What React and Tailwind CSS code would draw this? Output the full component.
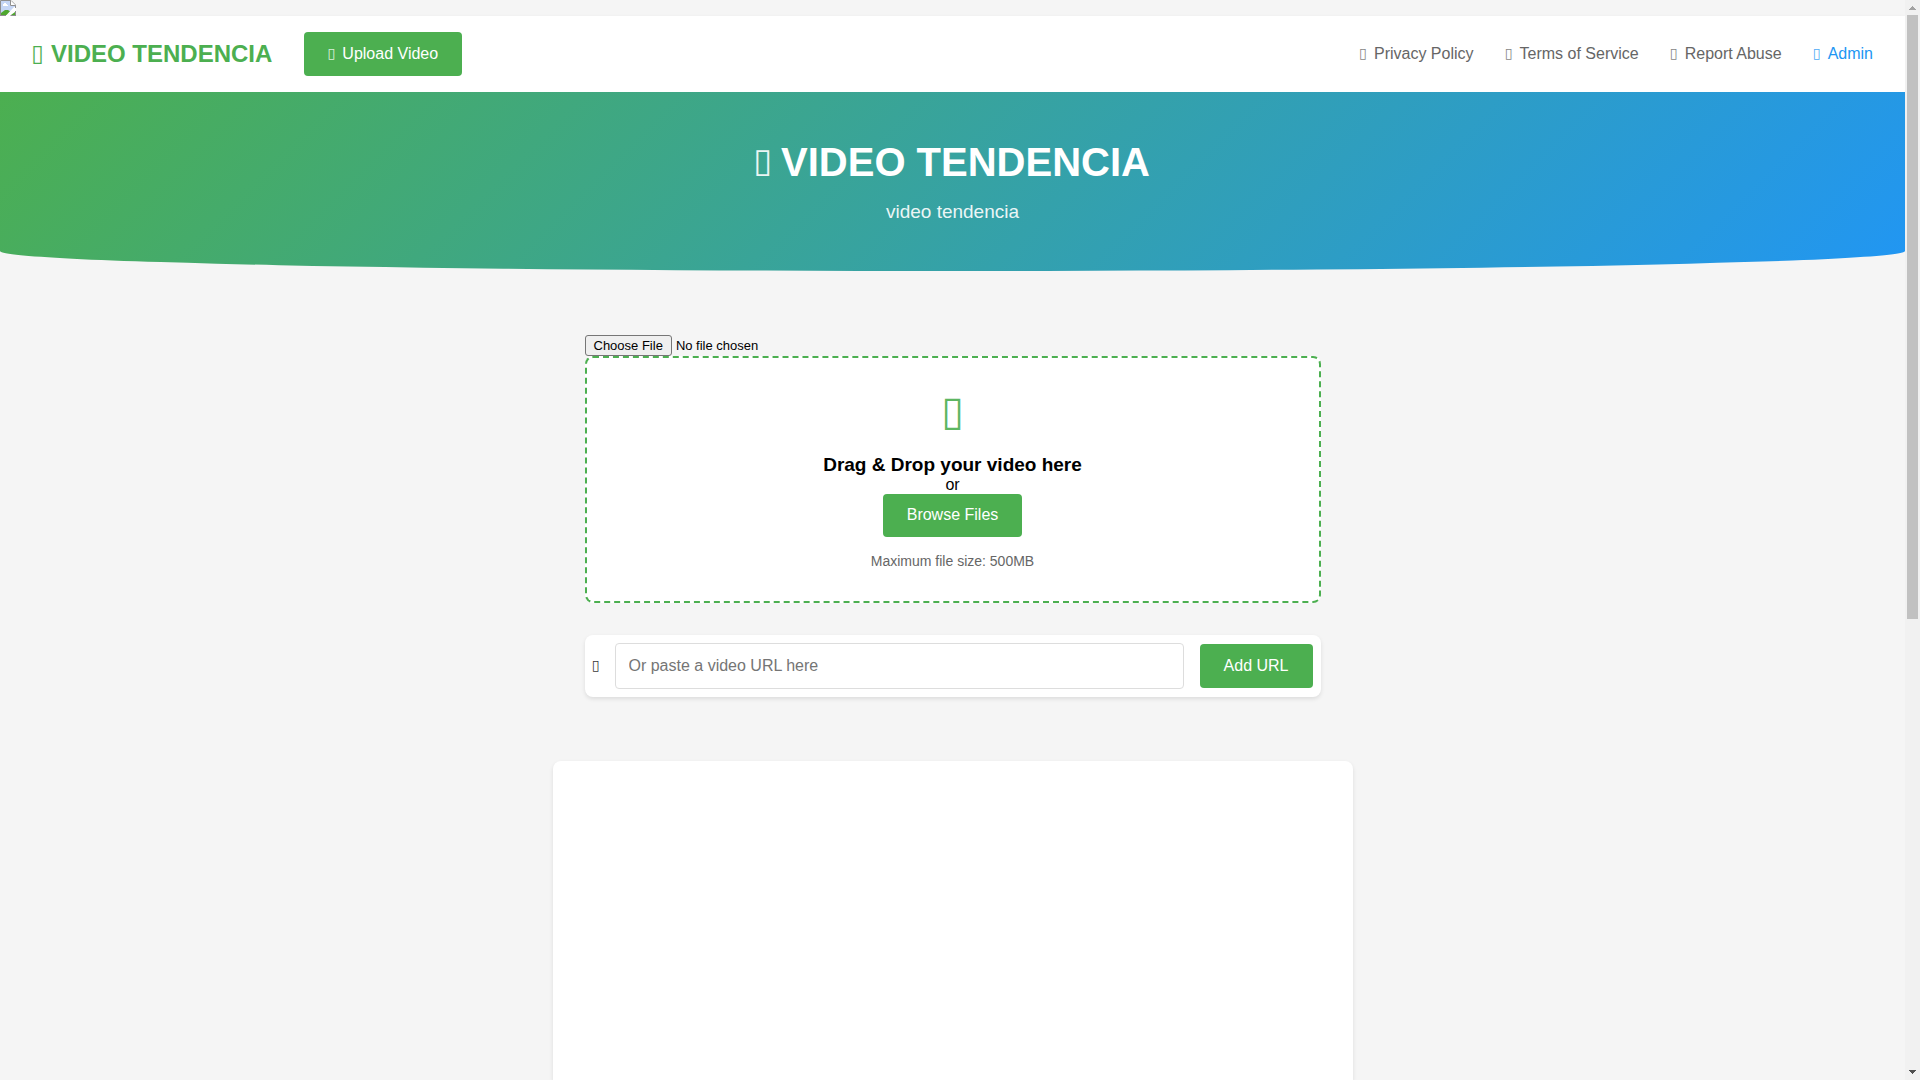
const glyphSizes = {
  sm: "h-[18px] w-1.5 pb-0.5 text-sm opacity-80",
  md: "h-6 w-[11px] pb-0.5 text-[23px]",
  lg: "h-[35px] w-[15px] pb-1.5 text-[34px] opacity-90",
  xl: "h-12 w-4 pb-1.5 text-[41px] opacity-90",
};

function Glyph({ size = "sm" }) {
  return (
    <i
      aria-hidden="true"
      className={`inline-flex shrink-0 items-center justify-center font-['DejaVu_Sans',sans-serif] font-normal not-italic leading-none ${glyphSizes[size]}`}
    >
      ▯
    </i>
  );
}

const links = [
  { label: "Privacy Policy", color: "text-[#666666]" },
  { label: "Terms of Service", color: "text-[#666666]" },
  { label: "Report Abuse", color: "text-[#666666]" },
  { label: "Admin", color: "text-[#2196f3]" },
];

function MissingImage() {
  return (
    <svg width="16" height="16" viewBox="0 0 16 16" className="block" role="img" aria-label="Missing image">
      <path d="M0 0h11l5 5v11H0z" fill="#fff" />
      <path d="M1 1h9v5h5v2L8 15H1z" fill="#c5d6f6" />
      <path d="M3 6V4h1V3h2v1h1v1h1v1z" fill="#fff" />
      <path d="M1 15v-2l4-3h3l3 2-3 3z" fill="#4ea72e" />
      <path d="M15 7v2l-7 6.500H6L14 7z" fill="#fff" />
      <path d="M11 15l4-3v3z" fill="#4ea72e" />
      <path d="M0.500 16V0.500H11l4.500 4.500v3M15.500 11v5M0 15.500h6M10.500 15.500h5" fill="none" stroke="#8f8f8f" />
      <path d="M10.500 0.500v5h5" fill="#fff" stroke="#8f8f8f" />
    </svg>
  );
}

function Scrollbar() {
  return (
    <div aria-hidden="true" className="flex w-[15px] shrink-0 flex-col items-center bg-[#f1f1f1]">
      <svg width="15" height="15" viewBox="0 0 15 15" className="shrink-0" shapeRendering="crispEdges">
        <path d="M7 6h1v1h1v1h1v1h1v1H4V9h1V8h1V7h1z" fill="#a3a3a3" />
      </svg>
      <div className="flex min-h-0 w-[11px] flex-1 flex-col">
        <div className="h-[57.500%] bg-[#c1c1c1]" />
      </div>
      <svg width="15" height="15" viewBox="0 0 15 15" className="shrink-0" shapeRendering="crispEdges">
        <path d="M4 5h7v1h-1v1H9v1H8v1H7V8H6V7H5V6H4z" fill="#505050" />
      </svg>
    </div>
  );
}

export default function App() {
  return (
    <div className="flex h-screen overflow-hidden bg-[#f5f5f5] font-['Liberation_Sans',Arial,sans-serif] text-base leading-[18px] text-black">
      <div className="flex min-w-0 flex-1 flex-col">
        <MissingImage />
        <nav className="flex items-center justify-between bg-white px-8 py-4 shadow-[0_2px_4px_rgba(0,0,0,0.1)]">
          <div className="flex items-center gap-8">
            <a href="#" className="flex items-center gap-2 text-2xl font-bold text-[#4caf50]">
              <Glyph size="md" />
              VIDEO TENDENCIA
            </a>
            <button type="button" className="flex h-11 items-center gap-2 rounded bg-[#4caf50] px-6 text-white">
              <Glyph />
              Upload Video
            </button>
          </div>
          <div className="flex items-center gap-8">
            {links.map((l) => (
              <a key={l.label} href="#" className={`flex items-center gap-2 ${l.color}`}>
                <Glyph />
                {l.label}
              </a>
            ))}
          </div>
        </nav>

        <header className="relative rounded-b-[50%_20px] bg-[linear-gradient(135deg,#4caf50,#2196f3)] px-8 py-12 text-center text-white">
          <h1 className="mb-4 flex items-center justify-center gap-[11px] text-[40px] font-bold leading-[45px]">
            <Glyph size="lg" /> VIDEO TENDENCIA
          </h1>
          <p className="text-[19px] leading-[22px] opacity-90">video tendencia</p>
        </header>

        <section className="mx-auto w-full max-w-[800px] px-8 py-16">
          <input
            type="file"
            aria-label="Video file"
            className="block h-[21px] text-[13px] leading-[15px] file:h-[21px] file:rounded-[3px] file:border file:border-solid file:border-[#767676] file:bg-[#efefef] file:px-2 file:text-black"
          />
          <div className="rounded-lg border-2 border-dashed border-[#4caf50] bg-white p-8 text-center">
            <div className="mb-4 flex h-12 items-center justify-center text-[#4caf50]">
              <Glyph size="xl" />
            </div>
            <h3 className="text-[19px] font-bold leading-[22px]">Drag &amp; Drop your video here</h3>
            <p>or</p>
            <button type="button" className="mx-auto block rounded bg-[#4caf50] px-6 pb-[13px] pt-3 text-white">
              Browse Files
            </button>
            <p className="mt-4 text-sm leading-4 text-[#666666]">Maximum file size: 500MB</p>
          </div>
          <form className="mt-8 flex items-center gap-4 rounded-lg bg-white p-2 shadow-[0_2px_4px_rgba(0,0,0,0.1)]">
            <Glyph />
            <input
              type="url"
              aria-label="Video URL"
              placeholder="Or paste a video URL here"
              className="h-[46px] min-w-0 flex-1 rounded border border-[#dddddd] px-[13px] placeholder:text-[#757575]"
            />
            <button type="button" className="h-11 rounded bg-[#4caf50] px-6 text-white">
              Add URL
            </button>
          </form>
        </section>

        <main className="mx-auto w-full max-w-[800px] flex-1 rounded-t-lg bg-white shadow-[0_2px_4px_rgba(0,0,0,0.1)]" />
      </div>
      <Scrollbar />
    </div>
  );
}
